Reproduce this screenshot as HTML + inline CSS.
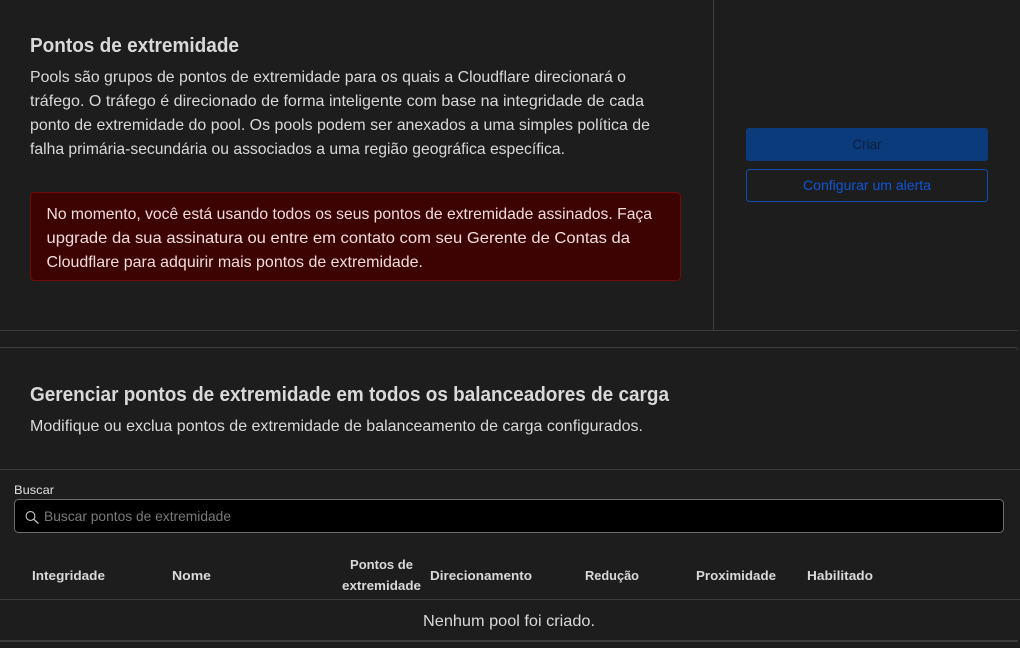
<!DOCTYPE html>
<html lang="pt-BR">
<head>
<meta charset="utf-8">
<title>Pontos de extremidade</title>
<style>
html,body{margin:0;padding:0;background:#1d1d1d;width:1020px;height:648px;overflow:hidden}
svg{display:block;position:absolute;left:0;top:0}
text{font-family:"Liberation Sans",sans-serif;font-size:16px;fill:#d9d9d9}
.b{font-weight:bold}
.h{font-size:13px;font-weight:bold;fill:#d9d9d9}
</style>
</head>
<body>
<svg width="1020" height="648" viewBox="0 0 1020 648" xmlns="http://www.w3.org/2000/svg">
<rect width="1020" height="648" fill="#1d1d1d"/>

<rect x="713" y="0" width="1" height="330" fill="#3d3d3d"/>
<rect x="0" y="330" width="1018" height="1" fill="#3d3d3d"/>
<path d="M0 347.5H1015a3 3 0 0 1 3 3" fill="none" stroke="#3d3d3d"/>

<text class="b" x="30" y="52" style="font-size:20px" textLength="209" lengthAdjust="spacingAndGlyphs">Pontos de extremidade</text>
<text x="30" y="82" textLength="596" lengthAdjust="spacingAndGlyphs">Pools são grupos de pontos de extremidade para os quais a Cloudflare direcionará o</text>
<text x="30" y="106" textLength="614" lengthAdjust="spacingAndGlyphs">tráfego. O tráfego é direcionado de forma inteligente com base na integridade de cada</text>
<text x="30" y="130" textLength="620" lengthAdjust="spacingAndGlyphs">ponto de extremidade do pool. Os pools podem ser anexados a uma simples política de</text>
<text x="30" y="154" textLength="535" lengthAdjust="spacingAndGlyphs">falha primária-secundária ou associados a uma região geográfica específica.</text>

<rect x="30.5" y="192.5" width="650" height="88" rx="4" fill="#3d0202" stroke="#730b0b"/>
<text x="46.5" y="219" style="fill:#f0dcdc" textLength="605.5" lengthAdjust="spacingAndGlyphs">No momento, você está usando todos os seus pontos de extremidade assinados. Faça</text>
<text x="46.5" y="243" style="fill:#f0dcdc" textLength="583.5" lengthAdjust="spacingAndGlyphs">upgrade da sua assinatura ou entre em contato com seu Gerente de Contas da</text>
<text x="46.5" y="267" style="fill:#f0dcdc" textLength="376.5" lengthAdjust="spacingAndGlyphs">Cloudflare para adquirir mais pontos de extremidade.</text>

<rect x="746" y="128" width="242" height="33" rx="3" fill="#0c3b7c"/>
<text x="867" y="149" text-anchor="middle" style="font-size:14px;fill:#0a1e3d" textLength="29" lengthAdjust="spacingAndGlyphs">Criar</text>
<rect x="746.5" y="169.5" width="241" height="32" rx="3" fill="none" stroke="#0c4fb0"/>
<text x="867" y="190" text-anchor="middle" style="font-size:14px;fill:#0f55d8" textLength="128" lengthAdjust="spacingAndGlyphs">Configurar um alerta</text>

<text class="b" x="30" y="401" style="font-size:20px" textLength="639" lengthAdjust="spacingAndGlyphs">Gerenciar pontos de extremidade em todos os balanceadores de carga</text>
<text x="30" y="431" textLength="613" lengthAdjust="spacingAndGlyphs">Modifique ou exclua pontos de extremidade de balanceamento de carga configurados.</text>

<rect x="0" y="469" width="1020" height="1" fill="#3d3d3d"/>

<text x="14" y="494" style="font-size:12px;fill:#e0e0e0" textLength="40" lengthAdjust="spacingAndGlyphs">Buscar</text>
<rect x="14.5" y="499.5" width="989" height="33" rx="4" fill="#000" stroke="#6e6e6e"/>
<circle cx="30.5" cy="516" r="4.4" fill="none" stroke="#c8c8c8" stroke-width="1.1"/>
<path d="M33.8 519.3L38.5 523.5" stroke="#c8c8c8" stroke-width="1.3" fill="none"/>
<text x="44" y="521" style="font-size:14px;fill:#7a7a7a" textLength="187" lengthAdjust="spacingAndGlyphs">Buscar pontos de extremidade</text>

<text class="h" x="32" y="580" textLength="73" lengthAdjust="spacingAndGlyphs">Integridade</text>
<text class="h" x="172" y="580" textLength="39" lengthAdjust="spacingAndGlyphs">Nome</text>
<text class="h" x="350" y="569" textLength="63" lengthAdjust="spacingAndGlyphs">Pontos de</text>
<text class="h" x="342" y="590" textLength="79" lengthAdjust="spacingAndGlyphs">extremidade</text>
<text class="h" x="430" y="580" textLength="102" lengthAdjust="spacingAndGlyphs">Direcionamento</text>
<text class="h" x="585" y="580" textLength="54" lengthAdjust="spacingAndGlyphs">Redução</text>
<text class="h" x="696" y="580" textLength="80" lengthAdjust="spacingAndGlyphs">Proximidade</text>
<text class="h" x="807" y="580" textLength="66" lengthAdjust="spacingAndGlyphs">Habilitado</text>

<rect x="0" y="599" width="1020" height="1" fill="#3d3d3d"/>
<text x="423" y="626" textLength="172" lengthAdjust="spacingAndGlyphs">Nenhum pool foi criado.</text>
<rect x="0" y="640" width="1018" height="2" fill="#3d3d3d"/>
</svg>
</body>
</html>
